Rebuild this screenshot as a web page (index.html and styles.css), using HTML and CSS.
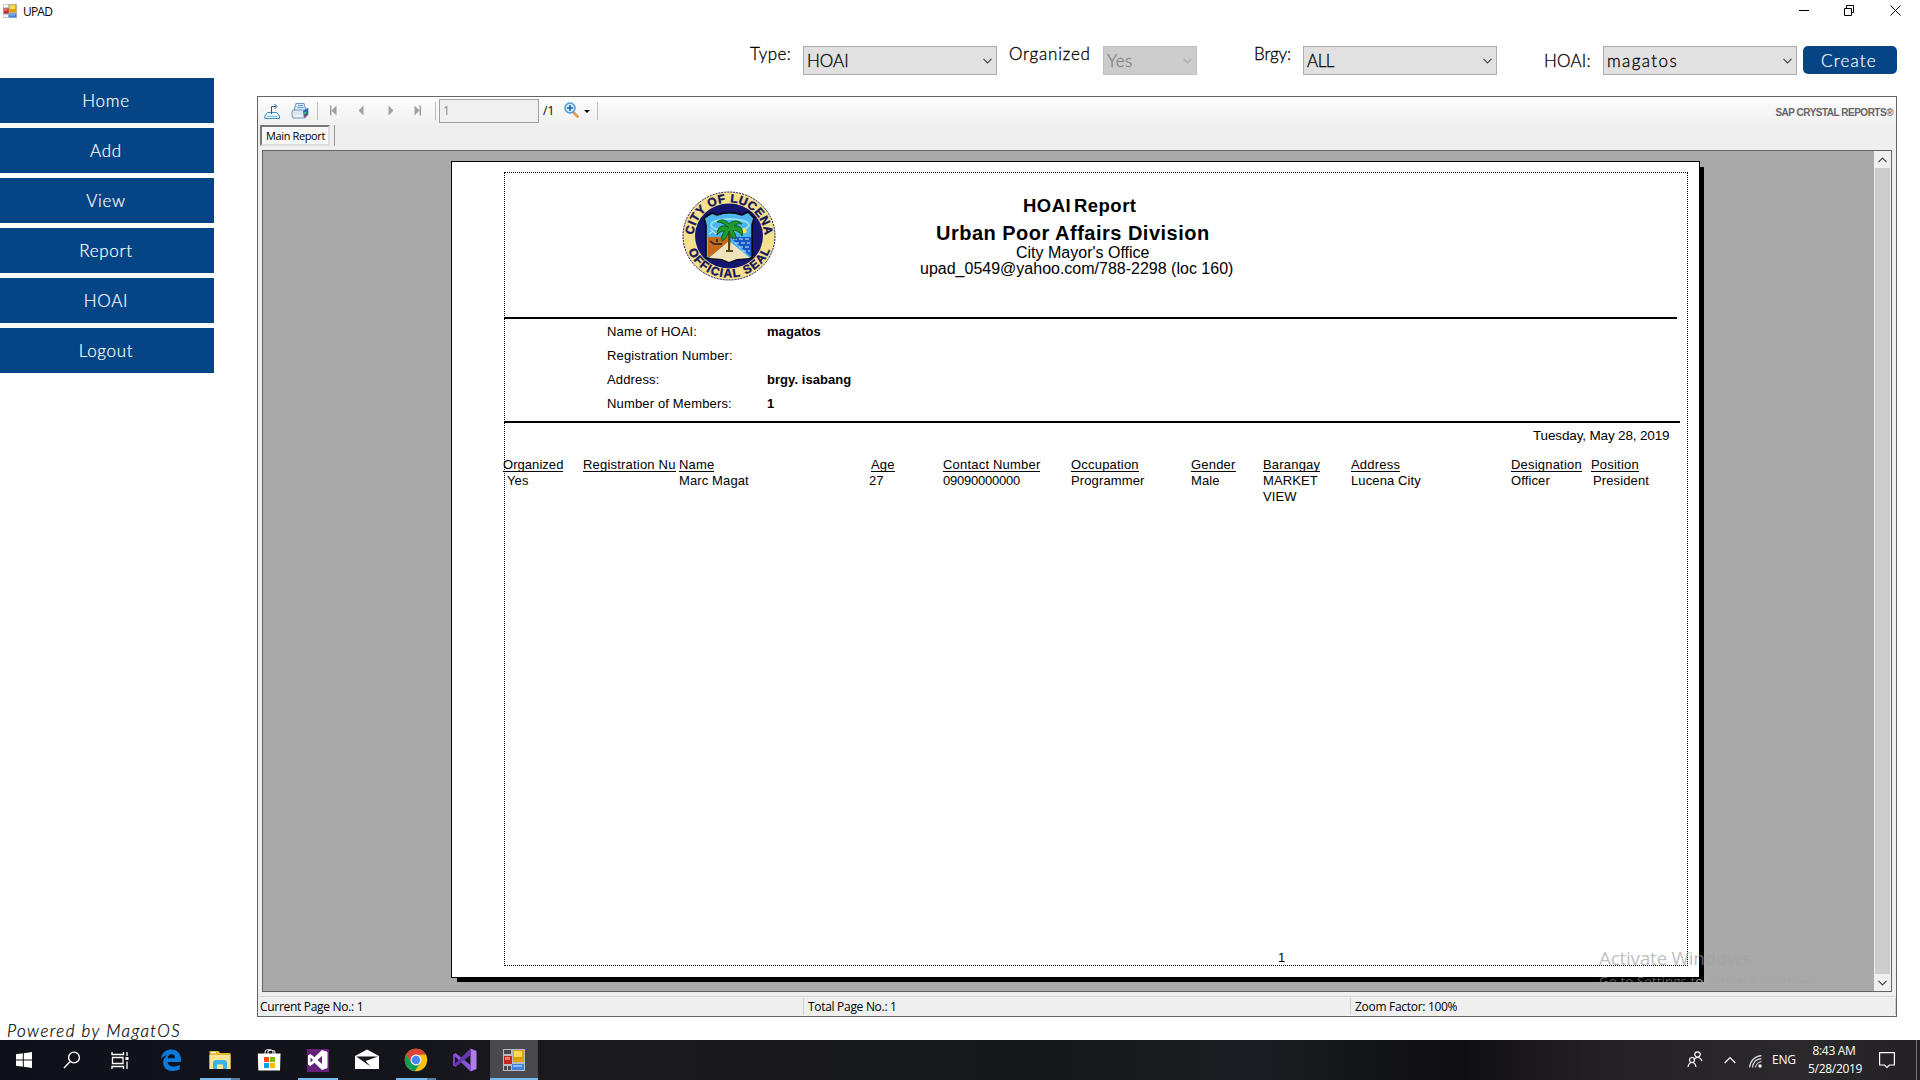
FILE: index.html
```html
<!DOCTYPE html>
<html lang="en">
<head>
<meta charset="utf-8">
<title>UPAD</title>
<link rel="stylesheet" href="styles.css">
</head>
<body>
<svg class="defs" width="0" height="0">
  <symbol id="app" viewBox="0 0 22 22">
    <path d="M0 0h22v22H0z" fill="#b9bcc2"/><path d="M1 1h7v4H1zM1 17h3v4H1zM5 17h3v4H5z" fill="var(--cell)"/>
    <path d="M1 7h8v8H1z" fill="#c4281c"/><path d="M2 8h5v3H2z" fill="#ef7a64"/>
    <path d="M10 1h11v12H10z" fill="#e0a100"/><path d="M11 2h8v6h-8z" fill="#ffdc55"/>
    <path d="M9 15h12v6H9z" fill="#3f7fe0"/><path d="M10 16h9v2h-9z" fill="#8ab8ff"/>
  </symbol>
  <symbol id="chev" viewBox="0 0 9 6"><path d="M.5.8l4 4 4-4" fill="none" stroke="currentColor" stroke-width="1.2"/></symbol>
</svg>
<header class="titlebar">
  <svg class="app-icon"><use href="#app"/></svg>
  <span class="app-name">UPAD</span>
  <svg class="win-buttons" viewBox="0 0 102 11" fill="none" stroke="#000"><path d="M0 5.500h10M45.500 3.500h7v7h-7zM47.500 3v-2.500h7v7h-2M91.500.5l10 10m0-10l-10 10"/></svg>
</header>
<div class="filters">
  <label class="high">Type:</label>
  <div class="select"><span>HOAI</span><svg><use href="#chev"/></svg></div>
  <label class="high organized">Organized</label>
  <div class="select off"><span>Yes</span><svg><use href="#chev"/></svg></div>
  <label class="high brgy">Brgy:</label>
  <div class="select"><span class="all">ALL</span><svg><use href="#chev"/></svg></div>
  <label class="hoai">HOAI:</label>
  <div class="select"><span class="name">magatos</span><svg><use href="#chev"/></svg></div>
  <button class="create">Create</button>
</div>
<div class="body">
  <aside class="side">
    <nav><a>Home</a><a>Add</a><a>View</a><a>Report</a><a>HOAI</a><a>Logout</a></nav>
    <p class="powered">Powered by MagatOS</p>
  </aside>
  <main class="viewer">
    <div class="tools">
      <svg class="tool-icons" viewBox="0 0 182 25">
        <g fill="none" stroke="#3d8dc4"><path d="M3.500 13.500L.8 17v2.500h14.700V17l-2.700-3.500z" fill="#e8f4fb"/><path d="M3 17.500h10" stroke="#7cbce0"/><path d="M7.500 15V7.500H12M10.500 5l2.500 2.500-2.500 2.500" stroke="#1d5f8f"/></g>
        <g><path d="M32 4.500h8l2 7H30z" fill="#d5e9fa" stroke="#6d93b8"/><path d="M34 6.500h5M33.500 8.500h6" stroke="#5b9bd8"/><path d="M29 11h13l2-2v6l-3 4H29l-1-2v-4z" fill="#dbe6f2" stroke="#7898b8"/><path d="M39 12l5-3v7l-4 3z" fill="#2c66ae"/><path d="M40 13h2v2h-2z" fill="#2ecc40"/><path d="M40 16h2v1.500h-2z" fill="#e33"/><path d="M30 17h8" stroke="#fff"/></g>
        <path d="M53.500 3v18M171.500 3v18" stroke="#bdbdbd"/>
        <g fill="#a0a0a0"><path d="M66 6.500h1.500v10H66zM72.500 6.500v10l-5-5zM99.500 6.500v10l-5-5zM124.500 6.500v10l5-5zM150.500 6.500v10l5-5zM155.500 6.500h1.500v10h-1.500z"/></g>
      </svg>
      <div class="page-input">1</div>
      <span class="total">/1</span>
      <svg class="zoom-icon" viewBox="0 0 36 25"><path d="M10 14l3.500 3.500" stroke="#e0a060" stroke-width="3" stroke-linecap="round"/><circle cx="6" cy="9" r="5" fill="#cfe9fb" stroke="#4f9bd0" stroke-width="1.500"/><path d="M6 6v6M3 9h6" stroke="#1c5f9f" stroke-width="1.600"/><path d="M20 11h6l-3 3z" fill="#000"/><path d="M33.500 3v18" stroke="#bdbdbd"/></svg>
      <span class="sap">SAP CRYSTAL REPORTS®</span>
    </div>
    <div class="tabs"><div class="tab">Main Report</div></div>
    <div class="canvas">
      <div class="desk">
        <article class="paper">
          <div class="margins">
            <div class="letterhead">
              <svg class="seal" viewBox="0 0 94 90">
                <defs><path id="arcTop" d="M11.500 46a35.500 34.500 0 0 1 71 0"/><path id="arcBottom" d="M3.500 45a43.500 41.500 0 0 0 87 0"/></defs>
                <ellipse cx="47" cy="45" rx="46" ry="44" fill="#f4e08d" stroke="#14145c" stroke-dasharray="2 1"/>
                <ellipse cx="47" cy="45" rx="34" ry="32.500" fill="#14166e"/>
                <path d="M30 22l5 2c8-3 17-3 25 0l6-3 6 6-2 7v33l-14 1-9 3-9-3-14-1V34l-2-7z" fill="#4cb4f0" stroke="#000" stroke-width="1.500"/>
                <ellipse cx="48" cy="34" rx="19" ry="6" fill="none" stroke="#8fe0e8" stroke-width="2"/>
                <path d="M26 46h22v4L28 66h-2z" fill="#c66a18"/><path d="M48 46h21v20z" fill="#1758c8"/>
                <path d="M51 48h16M53 52h15M57 56h11M60 60h8" stroke="#c9e5ff" stroke-dasharray="4 2"/>
                <path d="M47 50L27 67l13 1 7 3 8-3 13-1z" fill="#efe2bc"/><path d="M28 50l4 3h8M35 48v3" stroke="#432" stroke-width="2" fill="none"/>
                <path d="M28 38l6 5 4-5M27 43l4-3" stroke="#e8f4f8" fill="none"/>
                <circle cx="62" cy="40" r="2.500" fill="#ffe23a"/>
                <path d="M46 40h3l-1 19h3v2h-7v-2h2z" fill="#5b4a12"/>
                <path d="M47 37c-6-5-12-1-12 7 2-3 5-4 8-4-3 3-4 7-3 10 4-2 6-6 7-10 1 5 4 7 7 8 0-4-1-6-3-8 4-1 7 1 9 5 2-8-3-11-8-10 2-2 5-3 8-2-3-4-10-4-13 0-3-5-9-5-12-2 4 0 8 2 12 6z" fill="#1f9a2c" stroke="#0b5c18"/>
                <text class="seal-text"><textPath href="#arcTop" startOffset="2" textLength="106">CITY OF LUCENA</textPath></text>
                <text class="seal-text"><textPath href="#arcBottom" startOffset="15" textLength="104">OFFICIAL SEAL</textPath></text>
              </svg>
              <div class="heading">
                <h1>HOAI Report</h1>
                <h2>Urban Poor Affairs Division</h2>
                <p class="office">City Mayor's Office</p>
                <p>upad_0549@yahoo.com/788-2298 (loc 160)</p>
              </div>
            </div>
            <dl class="facts">
              <dt>Name of HOAI:</dt><dd>magatos</dd>
              <dt>Registration Number:</dt><dd></dd>
              <dt>Address:</dt><dd>brgy. isabang</dd>
              <dt>Number of Members:</dt><dd>1</dd>
            </dl>
            <p class="date">Tuesday, May 28, 2019</p>
            <div class="table head">
              <span class="flush">Organized</span><span>Registration Nu</span><span>Name</span><span class="age">Age</span><span>Contact Number</span><span>Occupation</span><span>Gender</span><span>Barangay</span><span>Address</span><span>Designation</span><span>Position</span>
            </div>
            <div class="table">
              <span class="yes">Yes</span><span></span><span>Marc Magat</span><span>27</span><span class="digits">09090000000</span><span>Programmer</span><span>Male</span><span>MARKET<br>VIEW</span><span>Lucena City</span><span>Officer</span><span class="president">President</span>
            </div>
            <p class="page-no">1</p>
          </div>
          <div class="activate"><p>Activate Win<span>dows</span></p><small>Go to Settings t<span>o activate Windows.</span></small></div>
        </article>
      </div>
      <div class="scroll"><svg class="up"><use href="#chev"/></svg><div class="thumb"></div><svg><use href="#chev"/></svg></div>
    </div>
    <footer class="status"><div>Current Page No.: 1</div><div>Total Page No.: 1</div><div>Zoom Factor: 100%</div></footer>
  </main>
</div>
<footer class="taskbar">
  <div class="task sys"><svg viewBox="0 0 24 24"><path d="M4 6.300l6.800-1v6.200H4zM11.800 5.200L20 4v7.500h-8.200zM4 12.500h6.800v6.200l-6.800-1zM11.800 12.500H20V20l-8.200-1.200z" fill="#fff"/></svg></div>
  <div class="task sys"><svg viewBox="0 0 24 24" fill="none" stroke="#fff" stroke-width="1.400"><circle cx="14" cy="9.500" r="5.400"/><path d="M10.200 13.500L4 20"/></svg></div>
  <div class="task sys last"><svg viewBox="0 0 24 24" fill="none" stroke="#fff" stroke-width="1.300"><path d="M4 4v2.500h11.500V4M4.500 9.500h10.500v6H4.500zM4 21v-2.500h11.500V21M19 4v4M19 13.500V21"/><path d="M17.500 9h3v3h-3z" fill="#fff" stroke="none"/></svg></div>
  <div class="task"><svg viewBox="0 0 24 24"><path d="M2 11C3 4 7 1.500 12.500 1.500c6 0 9.500 4.500 9.500 9.500v3H8.500c.3 3 3 4.500 6 4.500 2.500 0 4.500-.7 6.300-1.800v4.600c-2 1-4.500 1.700-7.300 1.700-5.500 0-9.300-3.500-9.300-8.500 0-3.500 2-6 4.300-7.200C5.500 7.800 3.500 9 2 11zM8.600 10.300H16c0-2.500-1.200-4-3.500-4s-3.600 1.700-3.900 4z" fill="#0a7bdc"/></svg></div>
  <div class="task open"><svg viewBox="0 0 24 24"><path d="M1.500 3h9l1.500 2h10.500v16h-21z" fill="#e8b637"/><path d="M3 4h5v1.200H3z" fill="#fff"/><path d="M1.500 7h21v14h-21z" fill="#fde392"/><path d="M5 21v-7l2-2h10l2 2v7h-4v-4.500H9V21z" fill="#3bb4e6"/></svg><i class="more"></i></div>
  <div class="task"><svg viewBox="0 0 24 24"><path d="M8 6V4.500C8 .5 16 .5 16 4.500V6M11 6V3.500c0-1.500 7-2 7 1V6" fill="none" stroke="#ddd" stroke-width="1.100"/><path d="M.8 5.500h22.700L23 22.500H1.300z" fill="#fff"/><path d="M7 9h5v5H7z" fill="#f25022"/><path d="M13 9h5v5h-5z" fill="#7fba00"/><path d="M7 15h5v5H7z" fill="#00a4ef"/><path d="M13 15h5v5h-5z" fill="#ffb900"/></svg></div>
  <div class="task open"><svg viewBox="0 0 24 24"><path d="M1 1h22v23H1z" fill="#68217a"/><path d="M16 2l5.500 2v16L16 22l-7.500-7.200L4.500 18 2 16.800V7.200L4.500 6l4 3.200zM16 8l-4.500 4 4.500 4zM4.500 9.500v5L7 12z" fill="#fff" fill-rule="evenodd"/></svg><i></i></div>
  <div class="task"><svg viewBox="0 0 24 24"><path d="M0 8L12 1.500 24 8v13H0z" fill="#fff"/><path d="M1 8.500h22L10.500 13l5 5.500L3 9.800z" fill="#15151a"/></svg></div>
  <div class="task open"><svg viewBox="0 0 24 24"><circle cx="12" cy="12" r="11.200" fill="#fbc116"/><path d="M2.300 6.400A11.200 11.200 0 0 1 21.700 6.400L12 6.900l-5 7.900z" fill="#db4437"/><path d="M2.300 6.400A11.200 11.200 0 0 0 10.800 23.200L16.500 14.500 12 17.500 7.500 15z" fill="#0f9d58"/><circle cx="12" cy="12" r="5.400" fill="#fff"/><circle cx="12" cy="12" r="4.300" fill="#4285f4"/></svg><i class="more"></i></div>
  <div class="task"><svg viewBox="0 0 24 24"><path d="M17.500.5L23.500 3v18l-6 2.500z" fill="#b07cf0"/><path d="M0 6.500L2.500 5 17.500 17v6.500z" fill="#8a56d8"/><path d="M0 6.500L2 6v12l-2-.5z" fill="#7a45c8"/><path d="M0 17.500L17.500.5V7L2.500 19z" fill="#6a38ae"/></svg></div>
  <div class="task open active"><svg viewBox="-1 -1 24 24"><use href="#app" width="22" height="22"/></svg><i></i></div>
  <div class="tray">
    <svg class="people" viewBox="0 0 16 17" fill="none" stroke="#fff" stroke-width="1.200"><circle cx="10.500" cy="3.500" r="2.700"/><path d="M7 9c1-3 6-4 8 1"/><circle cx="5" cy="9" r="2.500"/><path d="M1 16c1-6 7-6 8 0"/></svg>
    <svg class="caret" viewBox="0 0 12 8" fill="none" stroke="#fff" stroke-width="1.200"><path d="M.7 7L6 1.500 11.300 7"/></svg>
    <svg class="wifi" viewBox="0 0 13 13" fill="none" stroke="#ddd" stroke-width="1.100"><path d="M.6 12.500C1 6 6 1 12.500.6M3.500 12.500C4 7.500 7.500 4 12.500 3.600M6.500 12.500c.3-3 3-5.500 6-6"/><circle cx="11" cy="11" r="1.700" fill="#fff" stroke="none"/></svg>
    <span class="lang">ENG</span>
    <div class="clock"><p>8:43 AM</p><p>5/28/2019</p></div>
    <svg class="note" viewBox="0 0 16 17" fill="none" stroke="#fff" stroke-width="1.200"><path d="M.6.6h14.800v12.400H10.500L8 15.500 5.500 13H.6z"/></svg>
    <i class="peek"></i>
  </div>
</footer>
</body>
</html>
```

FILE: styles.css
```css
*{box-sizing:border-box;margin:0;padding:0}
body{width:1920px;height:1080px;overflow:hidden;background:#fff;color:#000;font-family:"Open Sans",sans-serif;display:flex;flex-direction:column}
.defs{position:absolute}

/* window title */
.titlebar{height:46px;display:flex}
.app-icon{width:14px;height:14px;margin:4px 0 0 3px;--cell:#fff}
.app-name{font-size:12px;line-height:14px;margin:5px 0 0 6px;letter-spacing:-.8px}
.win-buttons{width:102px;height:11px;margin:5px 19px 0 auto}

/* report filters */
.filters{height:32px;display:grid;grid-template-columns:53px 194px 12px 94px 94px 57px 49px 194px 47px 59px 194px 6px 94px;padding-left:750px;font:300 17px/30px Lato,sans-serif;white-space:nowrap;-webkit-text-stroke:.3px}
.high{line-height:16px;letter-spacing:.4px}
.organized{grid-column:4;letter-spacing:.8px}
.brgy{grid-column:7;letter-spacing:-.1px}
.hoai{grid-column:10;letter-spacing:.2px}
.select{height:29px;border:1px solid #adadad;background:#e1e1e1;display:flex;align-items:center;justify-content:space-between;padding:0 4px 0 3px}
.select svg{width:9px;height:6px;color:#444}
.select .all{letter-spacing:-.5px}
.select .name{letter-spacing:1.400px}
.select.off{background:#ccc;border-color:#bfbfbf;color:#838383;letter-spacing:.4px}
.off svg{color:#aaa}
.create{grid-column:13;height:28px;border:0;border-radius:5px;background:#054585;color:#fff;font:300 17px/30px Lato,sans-serif;letter-spacing:1.200px;padding-right:2px;-webkit-text-stroke:.2px}

/* side menu */
.body{flex:1;min-height:0;display:flex}
.side{width:257px;display:flex;flex-direction:column;justify-content:space-between;font:300 17px/46px Lato,sans-serif;-webkit-text-stroke:.2px}
nav{display:flex;flex-direction:column;gap:5px;width:214px}
nav a{height:45px;background:#054585;color:#fff;text-align:center;letter-spacing:.7px;padding-right:2px}
.powered{font:italic 300 17px/20px Lato,sans-serif;letter-spacing:1.400px;padding-left:7px;margin-bottom:-1px}

/* report viewer */
.viewer{width:1640px;height:921px;margin-top:18px;border:1px solid #646464;background:#efefef;display:flex;flex-direction:column}
.tools{height:28px;display:flex;background:linear-gradient(#fdfdfd,#f0f0f0);align-items:flex-start;font-size:12px}
.tool-icons{width:182px;height:25px;margin:2px 0 0 6px}
.page-input{width:100px;height:24px;border:1px solid #a0a0a0;background:#f0f0f0;color:#888;margin:2px 0 0 -7px;line-height:21px;padding-left:3px}
.total{line-height:26px;margin:1px 0 0 4px;width:22px}
.zoom-icon{width:36px;height:25px;margin:2px 0 0 -1px}
.sap{margin:8px 3px 0 auto;font:bold 10px/16px "Liberation Sans",sans-serif;letter-spacing:-.5px;color:#666}
.tabs{height:25px;padding-left:2px;display:flex}
.tabs::after{content:"";width:1px;height:21px;margin-left:4px;background:#999}
.tab{width:70px;height:21px;border:2px solid #fff;border-color:#777 #ddd #ddd #777;background:#f8f8f8;font-size:11px;line-height:18px;letter-spacing:-.38px;padding-left:4px;white-space:nowrap}
.canvas{width:1630px;height:842px;margin-left:4px;border:1px solid #646464;display:flex}
.desk{flex:1;background:#a9a9a9;padding:10px 0 0 188px}
.scroll{width:17px;background:#f0f0f0;display:flex;flex-direction:column;align-items:center;padding:6px 0 5px}
.scroll svg{width:9px;height:6px;color:#444}
.scroll .up{transform:rotate(180deg)}
.thumb{width:15px;flex:1;background:#cdcdcd;margin:5px 0 6px}

/* report page */
.paper{width:1249px;height:817px;border:1px solid #000;background:#fff;box-shadow:5px 5px 0 -1px #000;padding:10px 0 0 52px;position:relative}
.margins{width:1184px;height:794px;border:1px dotted #000;font:13px/16px "Liberation Sans",sans-serif;display:flex;flex-direction:column}
.letterhead{height:146px;width:1173px;margin-left:-1px;border-bottom:2px solid #000;display:flex;padding:18px 0 0 178px}
.seal{width:94px;height:90px}
.seal-text{font:bold 12px "Liberation Sans",sans-serif;fill:#14145c;stroke:#14145c;stroke-width:.4}
.heading{padding-left:144px;font-size:16px}
h1{font-size:18.500px;line-height:30px;padding-left:103px;letter-spacing:.5px;word-spacing:-3px}
h2{font-size:20px;line-height:24px;padding-left:16px;letter-spacing:.49px}
.office{padding-left:96px}
.facts{height:104px;width:1176px;margin-left:-1px;border-bottom:2px solid #000;display:grid;grid-template:repeat(4,24px)/160px 1fr;padding:1px 0 0 103px;line-height:24px;letter-spacing:.15px}
dd{font-weight:bold;letter-spacing:.05px}
.date{line-height:24px;font-size:13.500px;letter-spacing:-.15px;padding:1px 0 0 1028px;margin-bottom:9px}
.table{display:grid;grid-template-columns:80px 96px 190px 74px 128px 120px 72px 88px 160px 80px 60px;margin-left:-2px;justify-items:start;letter-spacing:.12px;white-space:nowrap}
.head{height:16px;letter-spacing:.2px}
.head span{height:15px;line-height:16px;border-bottom:1px solid #000}
.head .flush{letter-spacing:.05px}
.age{margin-left:2px}
.yes{margin-left:4px}
.president{margin-left:2px}
.digits{letter-spacing:-.24px}
.page-no{margin:auto 0 -1px 773px}
.activate{position:absolute;left:1147px;top:779px;width:240px;height:42px;overflow:hidden;white-space:nowrap;color:rgba(150,150,150,.62)}
.activate span{color:#a5a5a5}
.activate p{font-size:19px;line-height:35px;letter-spacing:-.3px}
.activate small{display:block;font-size:13.500px;line-height:11px}

/* status line */
.status{display:flex;height:20px;margin-top:4px;border-top:1px solid #d7d7d7;font-size:12px;line-height:18px;letter-spacing:-.3px;padding-top:1px}
.status div{width:547px;height:17px;border-right:1px solid #d0d0d0;padding-left:4px}
.status div:first-child{width:546px;padding-left:2px}
.status div:last-child{width:545px}

/* taskbar */
.taskbar{height:40px;flex:none;display:flex;background:linear-gradient(90deg,#0e1019,#15161c 22%,#1b1a1e 30%,#15171b 55%,#1b1d22 65%,#0f0f13 76%,#262127 84%,#2b292c 94%,#241f25)}
.task{width:49px;height:40px;display:flex;flex-direction:column;align-items:center;padding:8px 2px 0 0;justify-content:space-between}
.sys{width:48px;padding-right:0}
.sys.last{margin-right:3px}
.task svg{width:24px;height:24px}
.task i{width:40px;height:2px;background:#76b9ed}
.task .more{background:linear-gradient(90deg,#76b9ed 31px,#56809f 31px)}
.active{background:#48484d;width:48px;padding-right:0;--cell:#48484d}
.active i{width:48px}
.tray{margin-left:auto;display:flex;color:#fff;font-size:12px}
.people{width:16px;height:17px;margin-top:11px}
.caret{width:12px;height:8px;margin:16px 0 0 21px}
.wifi{width:13px;height:13px;margin:15px 0 0 13px}
.lang{margin:11px 0 0 10px;width:36px;line-height:18px;letter-spacing:-.2px}
.clock{width:52px;text-align:center;line-height:18px;padding-top:2px;letter-spacing:-.3px}
.note{width:16px;height:17px;margin:12px 0 0 19px}
.peek{width:1px;background:#77747a;margin:0 3px 0 21px}
```
